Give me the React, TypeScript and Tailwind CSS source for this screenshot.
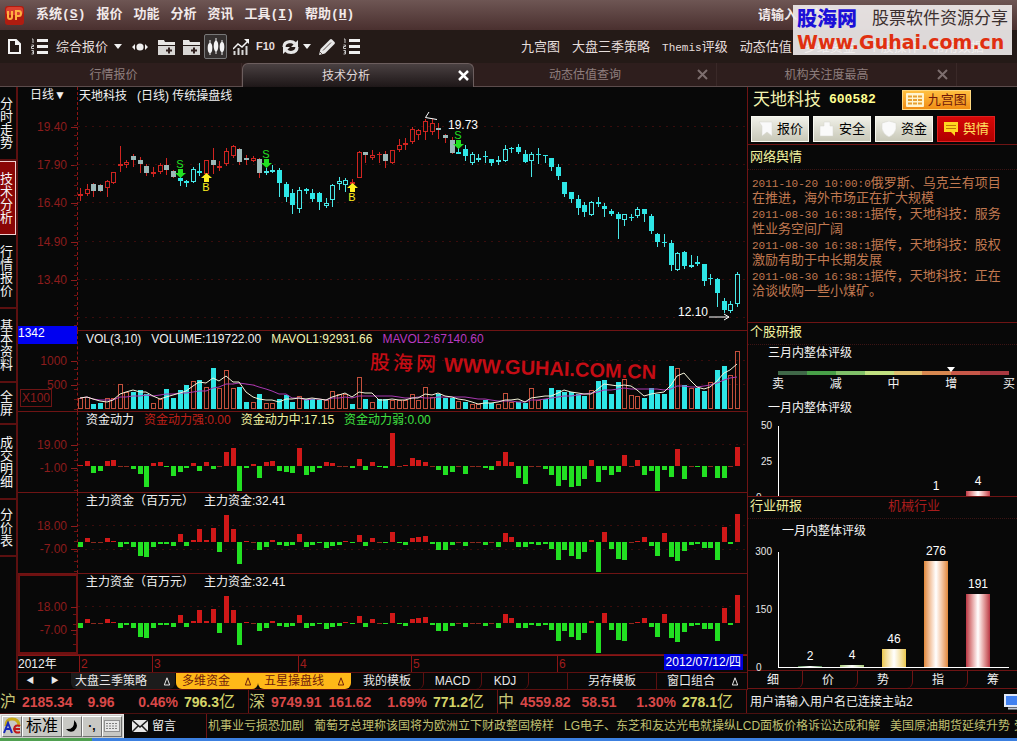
import type { ReactNode } from "react";
import { clsx } from "clsx";

type CandleKind = "r" | "g" | "c" | "h";
// [high, open/close top, open/close bottom, low, kind]
type Candle = [number, number, number, number, CandleKind];

const BAR_COUNT = 100;
const PLOT_WIDTH = 669;

const CANDLES: Candle[] = [
  [310, 326, 332, 348, "r"], [298, 313, 326, 332, "r"], [293, 298, 318, 335, "g"], [298, 301, 317, 321, "g"],
  [284, 287, 308, 335, "r"], [260, 262, 293, 297, "r"], [182, 238, 244, 260, "r"], [226, 230, 241, 248, "r"],
  [208, 213, 225, 246, "g"], [217, 226, 236, 264, "g"], [236, 242, 265, 273, "g"], [245, 262, 268, 276, "r"],
  [233, 240, 262, 268, "r"], [220, 240, 256, 270, "g"], [255, 259, 276, 280, "g"], [276, 280, 288, 303, "c"],
  [285, 288, 295, 305, "c"], [246, 252, 290, 293, "h"], [233, 258, 265, 272, "c"], [225, 226, 266, 270, "r"],
  [190, 226, 241, 268, "g"], [228, 243, 249, 258, "r"], [190, 198, 236, 244, "r"], [179, 184, 214, 220, "r"],
  [190, 192, 231, 240, "g"], [210, 220, 224, 240, "g"], [212, 219, 227, 230, "r"], [218, 222, 263, 278, "g"],
  [250, 259, 265, 270, "h"], [239, 255, 262, 264, "h"], [249, 255, 293, 336, "c"], [290, 297, 336, 350, "c"],
  [312, 324, 360, 387, "c"], [305, 316, 371, 384, "h"], [308, 311, 318, 328, "c"], [313, 324, 342, 350, "c"],
  [322, 324, 350, 375, "c"], [340, 353, 362, 370, "h"], [296, 300, 344, 366, "h"], [277, 288, 298, 315, "h"],
  [280, 286, 299, 320, "h"], [282, 290, 298, 300, "r"], [198, 202, 278, 278, "r"], [200, 202, 209, 234, "g"],
  [195, 210, 220, 226, "r"], [200, 206, 209, 234, "r"], [198, 207, 227, 248, "g"], [195, 196, 233, 236, "r"],
  [162, 181, 196, 200, "r"], [160, 175, 180, 194, "r"], [126, 133, 172, 176, "r"], [133, 135, 149, 166, "r"],
  [103, 109, 142, 165, "r"], [103, 114, 140, 150, "r"], [113, 128, 135, 162, "g"], [147, 150, 158, 173, "g"],
  [155, 166, 203, 207, "g"], [180, 200, 206, 206, "c"], [180, 193, 213, 228, "c"], [202, 208, 233, 240, "h"],
  [207, 219, 226, 230, "h"], [198, 212, 216, 234, "c"], [222, 223, 235, 242, "c"], [213, 226, 232, 240, "h"],
  [180, 192, 227, 230, "h"], [185, 189, 193, 205, "c"], [178, 187, 201, 207, "c"], [196, 207, 231, 235, "c"],
  [202, 208, 229, 276, "h"], [190, 207, 210, 236, "c"], [210, 211, 214, 234, "c"], [218, 220, 245, 258, "c"],
  [236, 247, 272, 284, "c"], [290, 292, 326, 337, "c"], [320, 322, 341, 353, "c"], [330, 342, 368, 390, "c"],
  [350, 361, 380, 396, "c"], [349, 352, 391, 393, "h"], [337, 352, 358, 365, "c"], [355, 364, 371, 395, "c"],
  [372, 378, 386, 392, "c"], [380, 388, 401, 462, "c"], [386, 388, 406, 422, "h"], [387, 395, 399, 408, "c"],
  [366, 372, 394, 398, "h"], [371, 373, 388, 410, "c"], [388, 394, 437, 448, "c"], [444, 446, 471, 486, "c"],
  [448, 471, 475, 486, "c"], [466, 475, 540, 557, "c"], [500, 505, 556, 558, "h"], [498, 501, 543, 552, "c"],
  [510, 541, 547, 550, "h"], [513, 530, 537, 543, "c"], [536, 538, 587, 602, "c"], [566, 579, 583, 600, "c"],
  [580, 581, 624, 665, "c"], [640, 648, 674, 683, "c"], [648, 658, 678, 684, "h"], [561, 568, 658, 665, "h"],
];

// negative = falling day
const VOLUME = [
  34, 37, -16, -19, 32, 32, 74, 50, -51, -56, -44, 18, 30, -60, -32, -56, -71, 83, -87, 65,
  -123, 62, 116, 62, -67, -20, 22, -45, 17, 17, -30, -43, -21, 38, -30, -30, -26, 28, 53, 44,
  44, -16, 95, -30, 22, -30, -30, 26, 26, 26, 44, 26, 65, 37, -44, -33, -32, 25, -21, 14,
  14, -26, -18, 16, 47, 22, -21, -19, 62, 26, -30, -62, -56, -50, -50, -44, -39, 56, -84, -86,
  -45, -80, 89, 41, 39, -33, -62, -45, -45, -129, 122, -72, 62, -62, -54, 80, -117, -129, 102, 173,
];

const POWER = [
  1, 5, -7, -5, 5, 6, 0, 0, -3, -8, -21, 3, 4, -1, -10, -6, -2, 3, -5, 4,
  -3, 0, 14, 18, -25, -2, 2, -12, 4, 5, -5, -6, -7, 18, -9, -6, -2, 4, 3, 0,
  0, -2, 7, -4, 4, -1, -2, 33, 0, 1, 8, 6, 4, 0, -4, -9, -6, 0, -8, 0,
  0, -2, -4, 5, 14, 4, -12, -18, 0, 0, -3, -9, -20, -14, -21, -20, -13, 6, -16, -4,
  -9, -6, 11, 0, 6, -9, -5, -25, -4, -11, 17, -13, 0, -1, -11, 0, -12, -12, 0, 19,
];

const MAIN_FUND = [
  -5, 4, 0, 0, 4, 1, -5, -2, -5, -14, -15, -5, -2, -2, -4, 8, -4, 2, 13, 2,
  14, -10, 27, 13, -22, 1, 0, -8, -5, 2, -3, -4, -3, 8, -5, -3, -1, -6, -4, -3,
  1, -1, 7, -4, 4, 0, -1, 10, -1, -3, 4, 5, 6, -2, -8, -8, -3, 0, -4, 0,
  0, -3, 0, -5, 9, 5, -5, -5, -2, -3, -2, -7, -18, -8, -14, -17, -10, 2, -30, 10,
  -7, -17, -18, 0, 1, 5, -4, -14, 9, -15, -19, -9, -3, -2, -6, -6, -18, 15, -2, 28,
];

const barX = (i: number) => Math.round((i * 657) / (BAR_COUNT - 1));
const pct = (x: number) => `${(x / PLOT_WIDTH) * 100}%`;

function average(period: number) {
  return VOLUME.map((_, i) => {
    const part = VOLUME.slice(Math.max(0, i - period + 1), i + 1);
    const mean = part.reduce((sum, v) => sum + Math.abs(v), 0) / part.length;
    return `${barX(i) + 2},${Math.round(78 - mean / 3)}`;
  }).join(" ");
}

function Plot({ height, grid, children }: { height: number; grid: number[]; children: ReactNode }) {
  return (
    <svg
      className="block w-full"
      height={height}
      viewBox={`0 0 ${PLOT_WIDTH} ${height}`}
      preserveAspectRatio="none"
      shapeRendering="crispEdges"
      aria-hidden="true"
    >
      {grid.map((y) => (
        <path key={y} d={`M0 ${y + 0.5}H${PLOT_WIDTH}`} stroke="#3a0c0c" strokeDasharray="2 5" />
      ))}
      {children}
    </svg>
  );
}

function CandlePlot() {
  return (
    <Plot height={243} grid={[39, 77, 115, 154, 192, 230]}>
      {CANDLES.map(([high, top, bottom, low, kind], i) => {
        const y = (v: number) => Math.round(v / 3) - 2;
        const x = barX(i);
        const wick = kind === "r" || kind === "g" ? "#d02420" : "#48e8e8";
        const h = Math.max(y(bottom) - y(top), 1);
        const hollow = kind === "r" || kind === "h";
        return (
          <g key={i}>
            <rect x={x + 2} y={y(high)} width={1} height={Math.max(y(low) - y(high), 1)} fill={wick} />
            <rect
              x={x}
              y={y(top)}
              width={5}
              height={h}
              fill={kind === "g" ? "#9cb8b8" : kind === "c" ? "#2ee6e6" : wick}
            />
            {hollow && h > 2 && <rect x={x + 1} y={y(top) + 1} width={3} height={h - 2} fill="#0a0a0a" />}
          </g>
        );
      })}
    </Plot>
  );
}

function VolumePlot() {
  return (
    <Plot height={80} grid={[29, 53]}>
      {VOLUME.map((v, i) => {
        const h = Math.round(Math.abs(v) / 3);
        return v < 0 ? (
          <rect key={i} x={barX(i)} y={78 - h} width={5} height={h} fill="#2ee6e6" />
        ) : (
          <rect key={i} x={barX(i) + 0.5} y={78.5 - h} width={4} height={h - 1} fill="none" stroke="#c4503c" />
        );
      })}
      <polyline points={average(10)} fill="none" stroke="#a838b0" shapeRendering="auto" />
      <polyline points={average(3)} fill="none" stroke="#f2f2d8" shapeRendering="auto" />
    </Plot>
  );
}

function FundPlot({ values, base, grid }: { values: number[]; base: number; grid: number[] }) {
  return (
    <Plot height={80} grid={grid}>
      {values.map((v, i) => (
        <rect
          key={i}
          x={barX(i)}
          y={v > 0 ? base - v : base}
          width={5}
          height={Math.max(Math.abs(v), 1)}
          fill={v > 0 ? "#d01818" : v < 0 ? "#22e022" : "#8a2a1e"}
        />
      ))}
    </Plot>
  );
}

interface PanelProps {
  height: string;
  labels: [string, number][];
  legend: ReactNode;
  axisExtra?: ReactNode;
  selected?: boolean;
  children: ReactNode;
}

function Panel({ height, labels, legend, axisExtra, selected, children }: PanelProps) {
  return (
    <section className={clsx("flex border-b border-[#6e1414]", height)}>
      <div
        className={clsx(
          "relative w-[60px] shrink-0",
          selected ? "border-2 border-[#6e1010]" : "border-r border-dashed border-[#8a1414]",
        )}
      >
        {labels.map(([text, y]) => (
          <span
            key={text}
            className={clsx(
              "absolute flex items-center leading-4 text-[#8c1c1c]",
              selected ? "-right-px -mt-0.5" : "right-0",
            )}
            style={{ top: y - 8 }}
          >
            {text}
            <i className="ml-1 h-px w-1.5 bg-[#8c1c1c]" />
          </span>
        ))}
        <div className="absolute right-0 bottom-0 top-[38px] w-[3px] bg-[repeating-linear-gradient(to_bottom,#6e1414_0_1px,transparent_1px_10px)]" />
        {axisExtra}
      </div>
      <div className="relative min-w-0 flex-1">
        {children}
        <div className="absolute left-0 top-0 flex gap-2.5 whitespace-pre pl-2 leading-4 text-[#f0f0f0]">{legend}</div>
      </div>
    </section>
  );
}

function Signal({ type, x, y }: { type: "S" | "B"; x: number; y: number }) {
  const sell = type === "S";
  return (
    <span
      className={clsx(
        "absolute flex w-3 -translate-x-1/2 items-center",
        sell ? "flex-col text-[#22e022]" : "flex-col-reverse text-[#fff020]",
      )}
      style={{ left: pct(x), top: y }}
    >
      <span className="text-[11px] leading-[10px]">{type}</span>
      <svg width="11" height="9" viewBox="0 0 11 9" fill="currentColor" aria-hidden="true">
        {sell ? <path d="M3 0h5v4h3L5.500 9 0 4h3z" /> : <path d="M3 9h5V5h3L5.500 0 0 5h3z" />}
      </svg>
    </span>
  );
}

function FolderIcon() {
  return (
    <svg width="17" height="16" viewBox="0 0 17 16" aria-hidden="true">
      <path d="M0 1h6l1 2h10v3H0z" fill="#e8e6e4" />
      <path d="M0 7h17v9H0z" fill="#d8d6d4" />
      <path d="M11 8.500v6M8 11.500h6" stroke="#30201e" strokeWidth="2" />
    </svg>
  );
}

function ListIcon() {
  return (
    <svg width="17" height="17" viewBox="0 0 17 17" aria-hidden="true">
      <path d="M6 2.500h11M6 8.500h11M6 14.500h11" stroke="#efefef" strokeWidth="3" />
      <path
        d="M1 1h1v4M0.500 7h2v1.500h-2V10.500h2.500M0.500 12.500h2v3.500h-2M1 14.200h1.500"
        fill="none"
        stroke="#c8c8c8"
      />
    </svg>
  );
}

function Caret() {
  return (
    <svg width="8" height="5" viewBox="0 0 8 5" fill="#f0f0f0" aria-hidden="true">
      <path d="M0 0h8L4 5z" />
    </svg>
  );
}

function CloseIcon({ bright }: { bright?: boolean }) {
  return (
    <svg width="11" height="11" viewBox="0 0 11 11" aria-hidden="true">
      <path d="M1 1l9 9M10 1l-9 9" stroke={bright ? "#ffffff" : "#7d6e6e"} strokeWidth={bright ? 2.5 : 2} />
    </svg>
  );
}

function MenuBar() {
  return (
    <header className="flex h-[30px] items-center bg-linear-to-b from-[#6e5654] to-[#4a302f] pl-[5px] text-[13px] font-bold text-[#f2eaea]">
      <svg width="19" height="19" viewBox="0 0 19 19" aria-label="UP">
        <rect width="19" height="19" rx="3" fill="#b01c10" />
        <rect x="1" y="1" width="17" height="8" rx="3" fill="#d84030" />
        <path d="M3 5v6q0 2 2 2t2-2V5M11 14V5h3q2 0 2 2.500T14 10h-3" fill="none" stroke="#ffb040" strokeWidth="2" />
      </svg>
      <nav className="ml-3 flex gap-[11px] font-['Liberation_Mono','Noto_Sans_CJK_SC',monospace]">
        <button className="font-bold">系统(<u>S</u>)</button>
        <button className="font-bold">报价</button>
        <button className="font-bold">功能</button>
        <button className="font-bold">分析</button>
        <button className="font-bold">资讯</button>
        <button className="font-bold">工具(<u>I</u>)</button>
        <button className="font-bold">帮助(<u>H</u>)</button>
      </nav>
      <span className="ml-auto w-[259px] overflow-hidden whitespace-nowrap">请输入用户名</span>
    </header>
  );
}

function ToolBar() {
  return (
    <div className="flex h-[33px] items-center overflow-hidden whitespace-nowrap bg-[#241a17] pl-2 text-[13px] text-[#e6dedc]">
      <button aria-label="新建">
        <svg width="13" height="15" viewBox="0 0 13 15" aria-hidden="true">
          <path d="M1 1h7l4 4v9H1zM8 1v4h4" fill="none" stroke="#f4f4f4" strokeWidth="2" />
        </svg>
      </button>
      <button className="ml-2.5" aria-label="列表"><ListIcon /></button>
      <button className="ml-2 flex items-center gap-1.5">综合报价 <Caret /></button>
      <button className="ml-2.5" aria-label="切换">
        <svg width="16" height="8" viewBox="0 0 16 8" fill="#f0f0f0" aria-hidden="true">
          <path d="M0 4l3-3v6zM16 4l-3-3v6z" />
          <circle cx="8" cy="4" r="3.600" />
        </svg>
      </button>
      <button className="ml-2.5" aria-label="加入板块"><FolderIcon /></button>
      <button className="ml-2" aria-label="加入自选"><FolderIcon /></button>
      <button className="ml-1 flex h-[25px] w-[23px] items-center justify-center rounded-xs border border-[#777] bg-[#34302f]" aria-label="K线">
        <svg width="18" height="18" viewBox="0 0 18 18" fill="#f4f4f4" aria-hidden="true">
          <path d="M3 2v15M9 0v16M15 2v15" stroke="#f4f4f4" />
          <ellipse cx="3" cy="10" rx="2.300" ry="5" />
          <ellipse cx="9" cy="8" rx="2.300" ry="5.500" />
          <ellipse cx="15" cy="9" rx="2.300" ry="5" />
        </svg>
      </button>
      <button className="ml-1.5" aria-label="走势">
        <svg width="16" height="16" viewBox="0 0 16 16" aria-hidden="true">
          <path d="M1.500 16v-4M5.500 16V9M9.500 16v-5M13.500 16V7" stroke="#d8d8d8" strokeWidth="2" />
          <path d="M0 10l5-5 4 3 6-6" fill="none" stroke="#f4f4f4" strokeWidth="1.500" />
          <path d="M11 0h5v5z" fill="#f4f4f4" />
        </svg>
      </button>
      <button className="ml-[7px] text-[11px] font-bold">F10</button>
      <button className="ml-[7px] flex items-center gap-1" aria-label="刷新">
        <svg width="17" height="16" viewBox="0 0 17 16" aria-hidden="true">
          <path d="M2 8q0-5 6-5.500 3 0 5 2M15 8q0 5-6 5.500-3 0-5-2" fill="none" stroke="#e6e6e6" strokeWidth="3.200" />
          <path d="M16 1v7H9zM1 15V8h7z" fill="#e6e6e6" />
        </svg>
        <Caret />
      </button>
      <button className="ml-2" aria-label="画线">
        <svg width="16" height="16" viewBox="0 0 16 16" aria-hidden="true">
          <path d="M0 16l1.500-6L11 .5q1-.8 2 0l2.500 2.500q.8 1 0 2L6 14.500z" fill="#e8e8e8" />
          <path d="M4 11.500L12 3.500M1 13l2 2" stroke="#5a4c4a" />
        </svg>
      </button>
      <button className="ml-2" aria-label="指标列表"><ListIcon /></button>
      <nav className="ml-auto flex w-[496px] items-center gap-3">
        <a href="#jiugong">九宫图</a>
        <a href="#sanji">大盘三季策略</a>
        <a href="#themis"><span className="font-['Liberation_Mono',monospace] text-[11px]">Themis</span>评级</a>
        <a href="#guzhi">动态估值</a>
        <a href="#duowei">多维资金</a>
        <a href="#caozuo">个股操作</a>
        <a href="#shuju">常用数据</a>
      </nav>
    </div>
  );
}

const PAGE_TABS = [
  { name: "行情报价", width: "w-[23.8%]", shift: "mr-3.5" },
  { name: "技术分析", width: "w-[22.8%]", shift: "mr-6" },
  { name: "动态估值查询", width: "w-[23.9%]", shift: "mr-5" },
  { name: "机构关注度最高", width: "w-[23.6%]", shift: "mr-5" },
];

function PageTabs() {
  return (
    <div className="flex h-6 border-b border-[#5c4c4c] bg-[#2e1e1d]" role="tablist">
      {PAGE_TABS.map(({ name, width, shift }, i) => (
        <div
          key={name}
          className={clsx(
            "relative flex items-center justify-center text-xs",
            width,
            i === 1
              ? "-mb-px rounded-t-md border-x border-t border-[#6c5e5e] bg-linear-to-b from-[#4a4142] to-[#1e1718] text-[#e0d8d8]"
              : "border-r border-[#3a2928] text-[#8e7f7e]",
          )}
        >
          <button role="tab" aria-selected={i === 1} className={shift}>{name}</button>
          {i > 0 && (
            <button className={clsx("absolute", i === 1 ? "right-1" : "right-2")} aria-label={`关闭${name}`}>
              <CloseIcon bright={i === 1} />
            </button>
          )}
        </div>
      ))}
    </div>
  );
}

const SIDE_ITEMS: [string, string][] = [
  ["分时走势", "h-[74px]"],
  ["技术分析", "h-[74px]"],
  ["行情报价", "h-[74px]"],
  ["基本资料", "h-[74px]"],
  ["全屏", "h-[42px]"],
  ["成交明细", "h-[75px]"],
  ["分价表", "h-[57px]"],
];

function SideNav() {
  return (
    <nav className="flex w-[18px] shrink-0 flex-col border-r-2 border-[#5c1010] text-[13px] leading-[13px] text-[#f4f4f4]">
      {SIDE_ITEMS.map(([name, height]) => (
        <button
          key={name}
          className={clsx(
            "flex w-full items-center justify-start overflow-hidden",
            height,
            name === "技术分析" ? "border border-l-0 border-[#f0d0d0] bg-[#8a0606]" : "border-b-2 border-[#5c1010]",
          )}
        >
          <span className="w-[13px] break-all">{name}</span>
        </button>
      ))}
    </nav>
  );
}

const MONTHS: [string, number][] = [["2", 1], ["3", 74], ["4", 220], ["5", 333], ["6", 479]];

function ChartArea() {
  const fundLegend = (
    <>
      <span>主力资金（百万元）</span>
      <span>主力资金:32.41</span>
    </>
  );
  return (
    <main className="flex min-w-0 flex-1 flex-col">
      <Panel
        height="h-[244px]"
        labels={[["19.40", 40], ["17.90", 78], ["16.40", 116], ["14.90", 155], ["13.40", 193]]}
        legend={null}
        axisExtra={<button className="absolute left-3 top-0 leading-4 text-[#f0f0f0]">日线▼</button>}
      >
        <CandlePlot />
        <h1 className="absolute left-px top-px whitespace-pre leading-4 text-[#f0f0f0]">天地科技   (日线) 传统操盘线</h1>
        <Signal type="S" x={102} y={72} />
        <Signal type="B" x={128} y={86} />
        <Signal type="S" x={188} y={62} />
        <Signal type="B" x={274} y={96} />
        <Signal type="S" x={380} y={43} />
        <span className="absolute top-[30px] leading-4 text-white" style={{ left: pct(370) }}>19.73</span>
        <svg className="absolute top-6" style={{ left: pct(346) }} width="14" height="10" viewBox="0 0 14 10" aria-hidden="true">
          <path d="M5 1L1.500 6.500 13 8.500" fill="none" stroke="#fff" />
        </svg>
        <span className="absolute top-[217px] leading-4 text-white" style={{ left: pct(600) }}>12.10</span>
        <svg className="absolute top-[226px]" style={{ left: pct(631) }} width="21" height="8" viewBox="0 0 21 8" aria-hidden="true">
          <path d="M0 4h20M15 1l5 3-5 3" fill="none" stroke="#fff" />
        </svg>
      </Panel>

      <Panel
        height="h-[81px]"
        labels={[["1000", 30], ["500", 54]]}
        legend={
          <>
            <span>VOL(3,10)</span>
            <span>VOLUME:119722.00</span>
            <span className="text-[#f4f4b0]">MAVOL1:92931.66</span>
            <span className="text-[#b838c0]">MAVOL2:67140.60</span>
          </>
        }
        axisExtra={
          <>
            <span className="absolute -top-[5px] left-0 h-[18px] w-[59px] bg-[#0000f0] leading-[14px] text-white">1342</span>
            <span className="absolute left-[2px] top-[58px] border border-[#6e1414] px-px leading-4 text-[#8c1c1c]">X100</span>
          </>
        }
      >
        <VolumePlot />
        <p className="absolute left-[43.600%] top-6 flex rotate-[2deg] items-center whitespace-nowrap text-xl leading-6 font-bold text-[#c40c14]">
          <span className="mr-2 flex gap-[3px] font-medium"><i className="not-italic">股</i><i className="not-italic">海</i><i className="not-italic">网</i></span>
          WWW.GUHAI.COM.CN
        </p>
      </Panel>

      <Panel
        height="h-[81px]"
        labels={[["19.00", 33], ["-1.00", 56]]}
        legend={
          <>
            <span>资金动力</span>
            <span className="text-[#c02018]">资金动力强:0.00</span>
            <span className="text-[#f4f4a0]">资金动力中:17.15</span>
            <span className="text-[#40e040]">资金动力弱:0.00</span>
          </>
        }
      >
        <FundPlot values={POWER} base={54} grid={[32]} />
      </Panel>

      <Panel height="h-[81px]" labels={[["18.00", 33], ["-7.00", 56]]} legend={fundLegend}>
        <FundPlot values={MAIN_FUND} base={49} grid={[32, 56]} />
      </Panel>

      <Panel height="h-[81px]" labels={[["18.00", 33], ["-7.00", 56]]} legend={fundLegend} selected>
        <FundPlot values={MAIN_FUND} base={49} grid={[32]} />
      </Panel>

      <div className="flex h-[17px] border-t border-[#8a1414] leading-4">
        <span className="w-[60px] shrink-0 text-[#f0f0f0]">2012年</span>
        <div className="relative flex-1">
          {MONTHS.map(([m, x]) => (
            <span key={m} className="absolute top-0 h-4 border-l border-[#8a1414] pl-px text-[#a01c1c]" style={{ left: pct(x) }}>{m}</span>
          ))}
          <span className="absolute right-1 top-0 -mt-0.5 whitespace-nowrap bg-[#0000d8] px-0.5 text-white">2012/07/12/四</span>
        </div>
      </div>

      <div className="flex h-[18px] items-stretch border-y border-[#5c1010] leading-4 text-[#e8e8e8]">
        <div className="flex w-[53px] items-center justify-around pr-1">
          <button aria-label="向左" className="text-[8px]">◀</button>
          <button aria-label="向右" className="text-[8px]">▶</button>
        </div>
        <button className="flex w-[104px] items-center justify-between rounded-b-md bg-[#1c1c1c] px-1">大盘三季策略 <Delta /></button>
        <button className="ml-px flex w-[82px] items-center justify-between rounded-b-md bg-[#ffb818] px-1.5 text-[#70200c]">多维资金 <Delta /></button>
        <button className="flex w-[93px] items-center justify-between rounded-b-md bg-[#ffb818] px-1.5 text-[#70200c]">五星操盘线 <Delta /></button>
        <button className="w-[73px] rounded-b-md border-r border-[#5c1010]">我的模板</button>
        <button className="w-[58px] rounded-b-md border-r border-[#5c1010]">MACD</button>
        <button className="w-[47px] rounded-b-md border-r border-[#5c1010]">KDJ</button>
        <button className="ml-auto w-[90px] border-x border-[#5c1010]">另存模板</button>
        <button className="flex w-[90px] items-center justify-between pl-2.5 pr-2">窗口组合 <Delta /></button>
      </div>
    </main>
  );
}

function Delta() {
  return (
    <svg width="8" height="9" viewBox="0 0 8 9" fill="none" stroke="currentColor" aria-hidden="true">
      <path d="M4 .8L1.300 8h5.400z" />
    </svg>
  );
}

const QUICK = [
  { name: "报价", path: "M2 1h13v14l-5-4-5 4V5z" },
  { name: "安全", path: "M5 5V1h6v4h3v10H1V5z" },
  { name: "资金", path: "M8 0l7 2v6q-1 5-7 8-6-3-7-8V2z" },
];

const NEWS = [
  ["2011-10-20 10:00:0", "俄罗斯、乌克兰有项目在推进，海外市场正在扩大规模"],
  ["2011-08-30 16:38:1", "据传，天地科技：服务性业务空间广阔"],
  ["2011-08-30 16:38:1", "据传，天地科技：股权激励有助于中长期发展"],
  ["2011-08-30 16:38:1", "据传，天地科技：正在洽谈收购一些小煤矿。"],
];

const SCALE = ["bg-[#406848]", "bg-[#48a048]", "bg-[#80c068]", "bg-[#c0e080]", "bg-[#e0c070]", "bg-[#d88850]", "bg-[#c85848]", "bg-[#a83840]"];

interface RatingBar {
  value: number;
  color: string;
}

const STOCK_BARS: RatingBar[] = [
  { value: 0, color: "" },
  { value: 0, color: "" },
  { value: 0, color: "" },
  { value: 1, color: "from-[#e08838] to-[#e08838]" },
  { value: 4, color: "from-[#c03848] to-[#c03848]" },
];

const INDUSTRY_BARS: RatingBar[] = [
  { value: 2, color: "from-[#488048] to-[#488048]" },
  { value: 4, color: "from-[#a8c878] to-[#a8c878]" },
  { value: 46, color: "from-[#ecc848] to-[#ecc848]" },
  { value: 276, color: "from-[#e08838] to-[#e08838]" },
  { value: 191, color: "from-[#b83444] to-[#b83444]" },
];

function RatingChart({ bars, max, height }: { bars: RatingBar[]; max: number; height: string }) {
  return (
    <div className={clsx("mr-2 flex", height)}>
      <div className="-my-1.5 flex w-[30px] flex-col items-end justify-between pr-1.5 text-[10px] leading-3 text-[#e8e8e8]">
        <span>{max}</span>
        <span>{max / 2}</span>
        <span className="w-full pl-2">0</span>
      </div>
      <div className="flex flex-1 items-end justify-between border-b border-l border-white px-[19px]">
        {bars.map(({ value, color }, i) => (
          <div
            key={i}
            className={clsx("relative w-6", value > 0 && "bg-linear-to-r via-white", color)}
            style={{ height: `${(value / max) * 100}%` }}
          >
            {value > 0 && (
              <span className="absolute bottom-full w-full text-center leading-5 text-white">{value}</span>
            )}
          </div>
        ))}
      </div>
    </div>
  );
}

function SectionTitle({ children }: { children: ReactNode }) {
  return (
    <h2 className="flex h-[22px] items-center border-b border-dotted border-[#3c1414] pb-1 pl-0.5 text-[13px] text-[#f2f2a0]">
      {children}
    </h2>
  );
}

function RightPanel() {
  return (
    <aside className="flex w-[270px] shrink-0 flex-col border-l border-[#6e1414]">
      <div className="h-[58px] border-b border-[#6e1414]">
        <div className="flex h-[25px] items-center pl-[5px] pt-px">
          <strong className="text-[17px] font-normal text-[#f2f2b0]">天地科技</strong>
          <b className="ml-2 font-['Liberation_Mono',monospace] text-[13px] text-[#ffff90]">600582</b>
          <button className="ml-[26px] flex h-5 items-center gap-1 border border-[#ffd880] bg-linear-to-b from-[#ffc040] to-[#f08c10] px-[3px] text-[13px] text-[#701808]">
            <svg width="18" height="14" viewBox="0 0 18 14" aria-hidden="true">
              <rect width="18" height="14" rx="1" fill="#fff4d0" />
              <path d="M2 3.500h14M2 7h14M2 10.500h14" stroke="#e8a030" strokeWidth="2" strokeDasharray="4 1" />
            </svg>
            九宫图
          </button>
        </div>
        <div className="flex gap-1 pl-[3px] pt-1 text-[13px]">
          {QUICK.map(({ name, path }) => (
            <button key={name} className="flex h-[26px] w-[58px] items-center justify-center gap-1 border border-[#f8f8f0] bg-linear-to-b from-[#f0f0e8] to-[#c8c8b8] text-black">
              <svg width="16" height="16" viewBox="0 0 16 16" fill="#fafafa" stroke="#d4d4cc" strokeWidth="0.500" aria-hidden="true">
                <path d={path} />
              </svg>
              {name}
            </button>
          ))}
          <button className="flex h-[26px] w-[58px] items-center justify-center gap-1 border border-[#e02020] bg-linear-to-b from-[#d80808] to-[#b00000] text-[#ffe060]">
            <svg width="16" height="14" viewBox="0 0 16 14" aria-hidden="true">
              <path d="M1 0h14v10h-3v4l-4-4H1z" fill="#ffd820" />
              <path d="M3 3.500h10M3 6.500h10" stroke="#c07808" />
            </svg>
            舆情
          </button>
        </div>
      </div>

      <div className="h-[178px] border-b border-[#6e1414] pt-[3px]">
        <SectionTitle>网络舆情</SectionTitle>
        <ul className="pl-1 pr-1.5 pt-[5px] text-[13px] leading-[15px] text-[#c07850]">
          {NEWS.map(([time, text], i) => (
            <li key={i} className="pb-px">
              <span className="whitespace-pre font-['Liberation_Mono',monospace] text-[11px] leading-none">{time}</span>
              {text}
            </li>
          ))}
        </ul>
      </div>

      <div className="h-[174px] overflow-hidden border-b border-[#6e1414] text-[#f4f4f4]">
        <SectionTitle>个股研报</SectionTitle>
        <h3 className="pl-5 leading-4">三月内整体评级</h3>
        <div className="relative ml-[30px] mr-2 mt-[10px] flex h-1">
          {SCALE.map((c) => <i key={c} className={clsx("flex-1", c)} />)}
          <svg className="absolute -top-1 left-3/4 -translate-x-1/2" width="8" height="5" viewBox="0 0 8 5" fill="#fff" aria-hidden="true">
            <path d="M0 0h8L4 5z" />
          </svg>
        </div>
        <div className="ml-6 mr-0.5 mt-px flex justify-between leading-4">
          <span>卖</span><span>减</span><span>中</span><span>增</span><span>买</span>
        </div>
        <h3 className="mb-[10px] mt-2 pl-5 leading-4">一月内整体评级</h3>
        <RatingChart bars={STOCK_BARS} max={50} height="h-[72px]" />
      </div>

      <div className="h-[174px] border-b border-[#6e1414] text-[#f4f4f4]">
        <SectionTitle>
          行业研报
          <a href="#industry" className="ml-[86px] text-[#a81c1c]">机械行业</a>
        </SectionTitle>
        <h3 className="mb-[13px] mt-1 pl-[34px] leading-4">一月内整体评级</h3>
        <RatingChart bars={INDUSTRY_BARS} max={300} height="h-[116px]" />
      </div>

      <div className="flex h-[18px] overflow-hidden border-b border-[#6e1414] leading-4 text-[#f0f0f0]">
        {["细", "价", "势", "指", "筹"].map((t) => (
          <button key={t} className="w-[55px] shrink-0 rounded-b-md border-r border-[#6e1414] pr-1">{t}</button>
        ))}
      </div>
    </aside>
  );
}

const INDEXES = [
  ["沪", "2185.34", "9.96", "0.46%", "796.3"],
  ["深", "9749.91", "161.62", "1.69%", "771.2"],
  ["中", "4559.82", "58.51", "1.30%", "278.1"],
];

function IndexBar() {
  return (
    <div className="flex h-[23px] items-center overflow-hidden whitespace-nowrap text-sm font-bold text-[#d84848]">
      {INDEXES.map(([name, price, change, rate, amount]) => (
        <div key={name} className="flex h-full flex-1 items-center border-r border-[#6e1414]">
          <span className="w-[22px] text-base font-normal text-[#c8c878]">{name}</span>
          <span className="w-[52px]">{price}</span>
          <span className="w-[54px] text-center">{change}</span>
          <span className="w-[50px] text-right">{rate}</span>
          <span className="flex items-center pl-1.5 text-[#d4d468]">
            {amount}
            <span className="text-base font-normal">亿</span>
          </span>
        </div>
      ))}
      <div className="flex w-[270px] shrink-0 items-center justify-between pl-[3px] text-xs font-normal text-[#f0f0f0]">
        用户请输入用户名已连接主站2
        <svg width="13" height="16" viewBox="0 0 13 16" aria-hidden="true">
          <rect x="1" y="1" width="16" height="11" fill="#4080f0" stroke="#e0e8f8" strokeWidth="2" />
          <path d="M4 14.500h9" stroke="#c0c8d8" strokeWidth="2" />
        </svg>
      </div>
    </div>
  );
}

function NewsBar() {
  const key = "flex h-[21px] items-center justify-center border border-t-white border-l-white border-r-[#707070] border-b-[#707070]";
  return (
    <footer className="flex h-[25px] items-center overflow-hidden whitespace-nowrap border-t border-[#4a1010] text-xs">
      <div className="flex shrink-0 border border-[#e8e8e8] bg-[#c8c8c4] p-px text-black">
        <button className={clsx(key, "w-5")} aria-label="输入法">
          <svg width="18" height="18" viewBox="0 0 18 18" fill="none" aria-hidden="true">
            <path d="M3 9q0-7 6-7 7 0 7 7" stroke="#c8a818" strokeWidth="3" />
            <path d="M1 16L5 6l4 10M2.500 12h5" stroke="#1828b8" strokeWidth="2" />
            <path d="M17 9q-5-2-6 3 1 5 6 3M11 12h6" stroke="#c01818" strokeWidth="2" />
          </svg>
        </button>
        <button className={clsx(key, "w-10 text-base")}>标准</button>
        <button className={clsx(key, "w-5")} aria-label="半角">
          <svg width="12" height="12" viewBox="0 0 12 12" aria-hidden="true">
            <path d="M8 0q6 6 0 11-5 2-8-2 9 1 8-9z" fill="#000" />
          </svg>
        </button>
        <button className={clsx(key, "w-5 font-bold")}>·,</button>
        <button className={clsx(key, "w-5")} aria-label="软键盘">
          <svg width="16" height="12" viewBox="0 0 16 12" aria-hidden="true">
            <rect x="0.500" y="0.500" width="15" height="11" fill="#e8e8e8" stroke="#909090" />
            <path d="M2 3.500h12M2 6h12M2 8.500h12" stroke="#808080" strokeDasharray="2 1" />
          </svg>
        </button>
      </div>
      <button className="ml-2 flex w-[74px] shrink-0 items-center gap-1 text-[#f0f0f0]">
        <svg width="16" height="12" viewBox="0 0 16 12" aria-hidden="true">
          <rect width="16" height="12" fill="#e8e8e8" />
          <path d="M0 0l8 7 8-7M0 12l6-6M16 12l-6-6" fill="none" stroke="#202020" strokeWidth="1.500" />
        </svg>
        留言
      </button>
      <p className="flex h-full min-w-0 flex-1 items-center gap-2.5 overflow-hidden border-l border-[#6e1414] pl-px text-[#c0c070]">
        <span>机事业亏损恐加剧</span>
        <span>葡萄牙总理称该国将为欧洲立下财政整固榜样</span>
        <span>LG电子、东芝和友达光电就操纵LCD面板价格诉讼达成和解</span>
        <span>美国原油期货延续升势</span>
        <span className="-ml-1.5">受</span>
      </p>
    </footer>
  );
}

export default function App() {
  return (
    <div className="relative flex min-h-screen flex-col overflow-hidden bg-[#080808] font-['Liberation_Sans','Noto_Sans_CJK_SC',sans-serif] text-xs">
      <MenuBar />
      <ToolBar />
      <PageTabs />
      <div className="flex">
        <SideNav />
        <ChartArea />
        <RightPanel />
      </div>
      <IndexBar />
      <NewsBar />
      <div className="flex min-h-[3px] flex-1">
        <i className="w-[9%] bg-[#50a050]" />
        <i className="flex-1 bg-[#3c80e0]" />
      </div>

      <div className="absolute right-[5px] top-[5px] h-[50px] w-[219px] overflow-hidden whitespace-nowrap bg-[#f2eeee]/90 px-1">
        <div className="flex h-7 items-center justify-between">
          <b className="text-xl font-black text-[#1c10d8]">股海网</b>
          <span className="text-[17px] text-[#3c3030]">股票软件资源分享</span>
        </div>
        <b className="block font-['DejaVu_Sans',sans-serif] text-[19px] leading-[18px] text-[#e03010]">Www.Guhai.com.cn</b>
      </div>
    </div>
  );
}
